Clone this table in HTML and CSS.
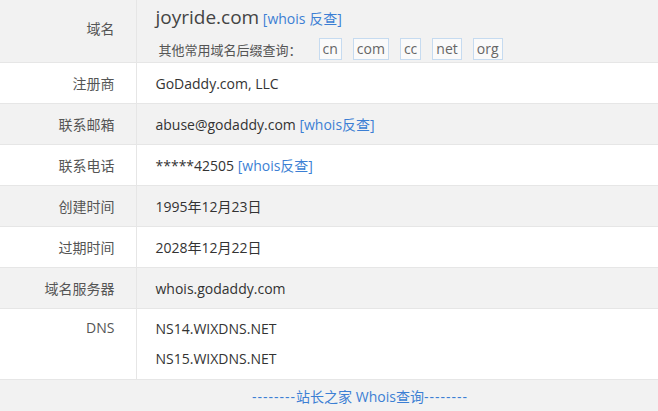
FILE: index.html
```html
<!DOCTYPE html>
<html lang="zh-CN">
<head>
  <meta charset="UTF-8" />
  <title>joyride.com Whois查询</title>
  <link rel="stylesheet" href="styles.css">
</head>
<body>
  <table class="whois">
    <tr class="gray">
      <td class="label label-domain">域名</td>
      <td class="value first">
        <div class="domain">
          <span class="domain-name">joyride.com</span>
          <a class="link" href="#">[whois 反查]</a>
        </div>
        <div class="suffix">
          <span>其他常用域名后缀查询：</span>
          <a class="tag" href="#">cn</a>
          <a class="tag" href="#">com</a>
          <a class="tag" href="#">cc</a>
          <a class="tag" href="#">net</a>
          <a class="tag" href="#">org</a>
        </div>
      </td>
    </tr>
    <tr>
      <td class="label">注册商</td>
      <td class="value">GoDaddy.com, LLC</td>
    </tr>
    <tr class="gray">
      <td class="label">联系邮箱</td>
      <td class="value">abuse@godaddy.com <a class="link" href="#">[whois反查]</a></td>
    </tr>
    <tr>
      <td class="label">联系电话</td>
      <td class="value">*****42505 <a class="link" href="#">[whois反查]</a></td>
    </tr>
    <tr class="gray">
      <td class="label">创建时间</td>
      <td class="value">1995年12月23日</td>
    </tr>
    <tr>
      <td class="label">过期时间</td>
      <td class="value">2028年12月22日</td>
    </tr>
    <tr class="gray">
      <td class="label">域名服务器</td>
      <td class="value">whois.godaddy.com</td>
    </tr>
    <tr>
      <td class="label label-top">DNS</td>
      <td class="value dns">
        <div>NS14.WIXDNS.NET</div>
        <div>NS15.WIXDNS.NET</div>
      </td>
    </tr>
    <tr class="gray">
      <td class="footer" colspan="2">
        <a class="link" href="#"><span class="dashes">--------</span>站长之家 Whois查询<span class="dashes">--------</span></a>
      </td>
    </tr>
  </table>
</body>
</html>
```

FILE: styles.css
```css
* {
  box-sizing: border-box;
}

body {
  margin: 0;
  font-family: "Open Sans", "Noto Sans CJK SC", sans-serif;
  font-size: 14px;
  color: #333;
  background: #fff;
}

a {
  text-decoration: none;
}

.whois {
  width: 100%;
  border-collapse: collapse;
}

.whois td {
  border-bottom: 1px solid #e6e6e6;
  height: 41px;
  padding: 0;
}

.gray {
  background: #f2f2f2;
}

.label {
  width: 136px;
  text-align: right;
  padding-right: 21px !important;
  color: #555;
  border-right: 1px solid #e6e6e6;
}

.label-domain {
  vertical-align: top;
  padding-top: 18px !important;
}

.label-top {
  vertical-align: top;
  padding-top: 9px !important;
}

.value {
  padding-left: 19px !important;
}

.first {
  height: 61px !important;
  vertical-align: top;
}

.link {
  color: #3c7fd4;
}

.domain {
  line-height: 24px;
  margin-top: 5px;
}

.domain-name {
  font-size: 19px;
  color: #444;
}

.suffix {
  display: flex;
  align-items: center;
  gap: 11px;
  height: 24px;
  margin: 6px 0 1px 3px;
  color: #555;
  font-size: 13px;
}

.suffix span {
  margin-right: 6px;
}

.tag {
  border: 1px solid #c6dbf0;
  background: #fafafa;
  color: #666;
  font-size: 14px;
  line-height: 20px;
  padding: 0 3px;
}

.dns {
  height: 71px !important;
  vertical-align: top;
  padding-top: 5px !important;
}

.dns div {
  line-height: 30px;
}

.footer {
  height: 32px !important;
  text-align: center;
  padding-left: 62px !important;
}

.dashes {
  letter-spacing: 1px;
}
```
